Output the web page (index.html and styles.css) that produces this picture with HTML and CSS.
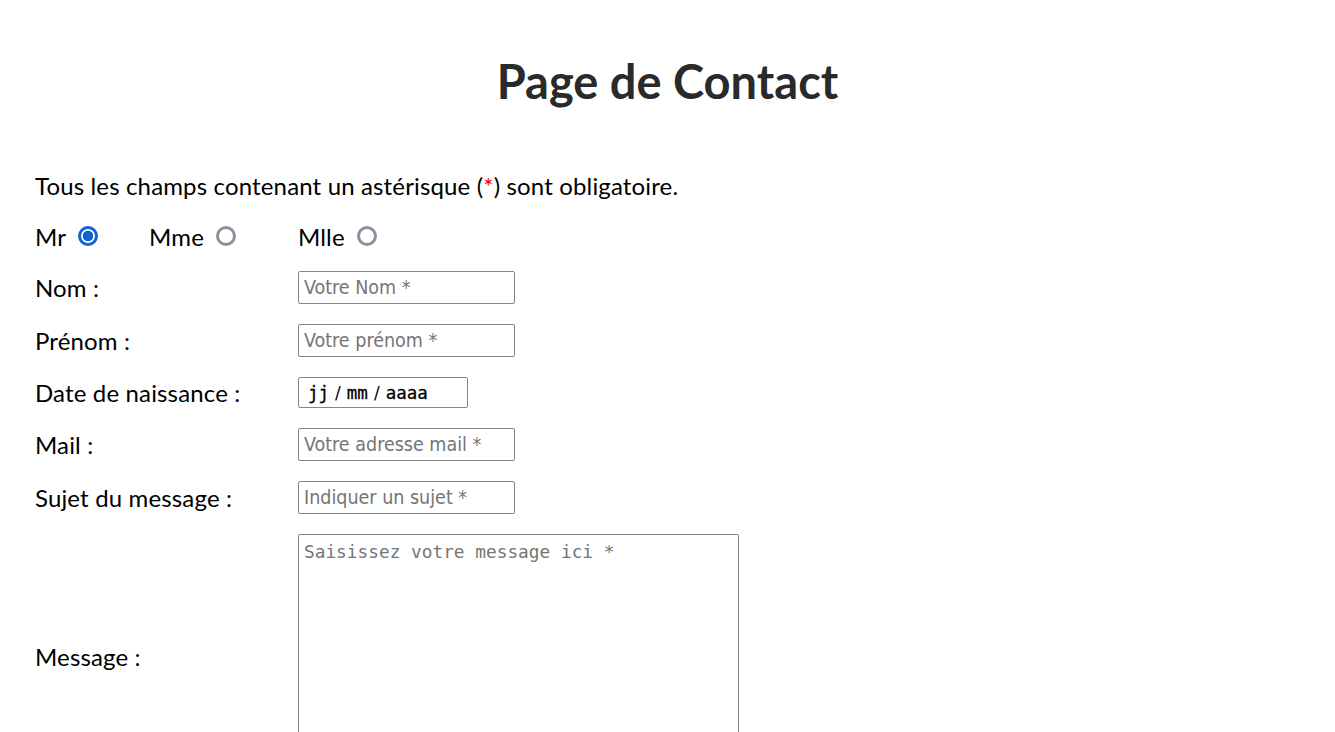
FILE: index.html
```html
<!DOCTYPE html>
<html lang="fr">
<head>
<meta charset="utf-8">
<title>Page de Contact</title>
<link rel="stylesheet" href="styles.css">
</head>
<body>
<h1 class="title">Page de Contact</h1>
<form class="form">
  <p class="note">Tous les champs contenant un astérisque (<span class="req">*</span>) sont obligatoire.</p>
  <div class="civ">
    <label class="civ-item civ-mr">Mr <input type="radio" name="civ" class="radio" checked></label>
    <label class="civ-item civ-mme">Mme <input type="radio" name="civ" class="radio"></label>
    <label class="civ-item">Mlle <input type="radio" name="civ" class="radio"></label>
  </div>
  <div class="row"><label class="lbl">Nom :</label><input class="field" type="text" placeholder="Votre Nom *"></div>
  <div class="row"><label class="lbl">Prénom :</label><input class="field" type="text" placeholder="Votre prénom *"></div>
  <div class="row"><label class="lbl">Date de naissance :</label><div class="date"><span>jj</span><span class="sep">/</span><span>mm</span><span class="sep">/</span><span>aaaa</span></div></div>
  <div class="row"><label class="lbl">Mail :</label><input class="field" type="email" placeholder="Votre adresse mail *"></div>
  <div class="row"><label class="lbl">Sujet du message :</label><input class="field" type="text" placeholder="Indiquer un sujet *"></div>
  <div class="row row-msg"><label class="lbl">Message :</label><textarea class="msg" placeholder="Saisissez votre message ici *"></textarea></div>
</form>
</body>
</html>
```
FILE: styles.css
```css
html, body { margin: 0; padding: 0; background: #fff; }
body { font-family: Lato, "Open Sans", sans-serif; color: #000; font-size: 24px; letter-spacing: 0.15px; }
.title {
  margin: 0;
  padding-top: 56px;
  height: 55px;
  text-align: center;
  font-size: 47px;
  line-height: 50px;
  font-weight: 700;
  color: #2a2a2a;
  letter-spacing: 0;
}
.form { padding: 60px 0 0 35px; }
.note { margin: 0; line-height: 30px; height: 30px; }
.req { color: #e00; }
.civ { display: flex; align-items: center; height: 30px; margin-top: 20px; }
.civ-item { display: flex; align-items: center; gap: 12px; }
.civ-mr { width: 114px; }
.civ-mme { width: 149px; }
.radio {
  appearance: none; -webkit-appearance: none;
  margin: 0; width: 20px; height: 20px; border-radius: 50%;
  border: 3px solid #8f8f9d; background: #fff; box-sizing: border-box;
}
.radio:checked {
  border-color: #0f63d5;
  background: radial-gradient(circle, #0f63d5 0 5px, #fff 5.5px);
}
.row { display: grid; grid-template-columns: 263px auto; align-items: center; margin-top: 20px; }
.lbl { line-height: 30px; }
.field {
  width: 217px; height: 33px; box-sizing: border-box; margin: 0;
  border: 1px solid #858585; border-radius: 2px; padding: 0 5px;
  font-family: "DejaVu Sans Condensed", Tahoma, sans-serif; font-size: 19.5px; color: #000;
  letter-spacing: 0;
}
.field::placeholder { color: #757575; }
.date {
  width: 170px; height: 31px; box-sizing: border-box;
  border: 1px solid #858585; border-radius: 2px; padding: 0 9px;
  display: flex; align-items: center; gap: 6px;
  font-family: "DejaVu Sans Mono", monospace; font-size: 17.5px; color: #000; font-weight: 400;
  letter-spacing: 0; -webkit-text-stroke: 0.3px #000;
}
.sep { font-family: "DejaVu Sans", sans-serif; font-size: 17px; -webkit-text-stroke: 0; }
.msg {
  width: 441px; height: 246px; box-sizing: border-box; margin: 0; resize: none;
  border: 1px solid #858585; border-radius: 2px; padding: 6px 5px;
  font-family: "DejaVu Sans Mono", monospace; font-size: 17.8px; letter-spacing: 0;
}
.msg::placeholder { color: #757575; }
```
